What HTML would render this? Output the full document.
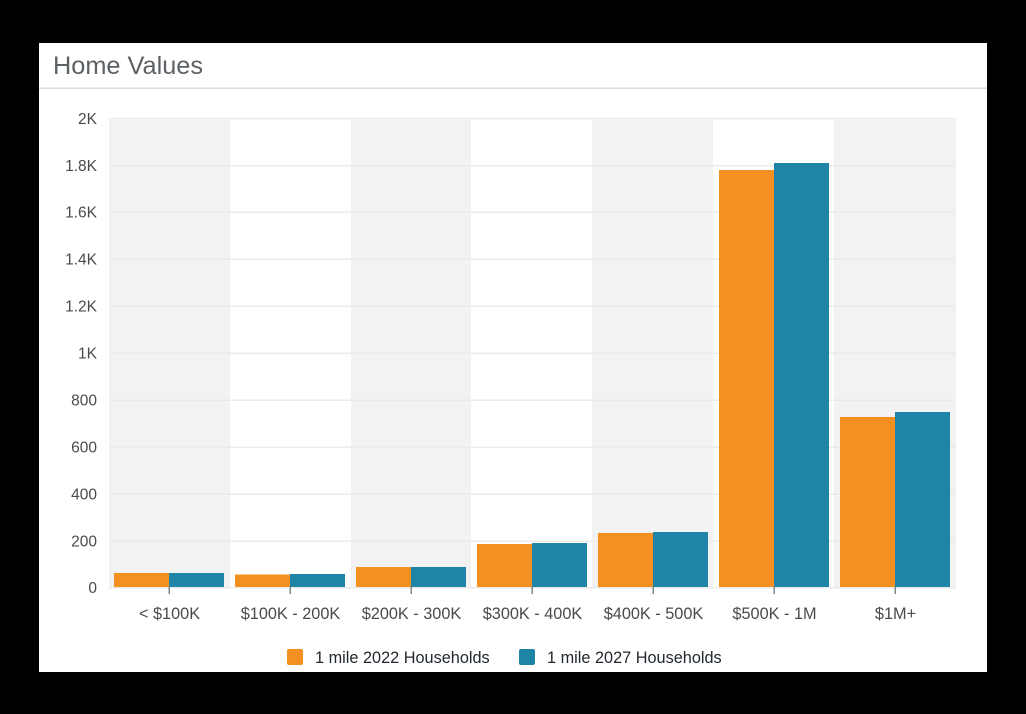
<!DOCTYPE html>
<html>
<head>
<meta charset="utf-8">
<style>
html,body{margin:0;padding:0;background:#000;width:1026px;height:714px;overflow:hidden}
svg{display:block;position:absolute;left:0;top:0}
text{font-family:"Liberation Sans",Arial,sans-serif}
.soft{filter:blur(.3px)}
</style>
</head>
<body>
<svg width="1026" height="714" viewBox="0 0 1026 714" xmlns="http://www.w3.org/2000/svg">
<rect x="39" y="43" width="948" height="629" fill="#fff"/>
<rect x="39" y="87.5" width="948" height="1.5" fill="#d9d9d9"/>
<text class="soft" x="53" y="74" font-size="25" fill="#5c6165" textLength="150" lengthAdjust="spacingAndGlyphs">Home Values</text>

<g fill="#f2f2f2">
<rect x="109" y="120" width="121" height="467"/>
<rect x="351" y="120" width="120" height="467"/>
<rect x="592" y="120" width="121" height="467"/>
<rect x="834" y="120" width="122" height="467"/>
</g>

<g fill="#ebebeb">
<rect x="109" y="118" width="847" height="1.5"/>
<rect x="109" y="165" width="847" height="1.5"/>
<rect x="109" y="211.5" width="847" height="1.5"/>
<rect x="109" y="258.5" width="847" height="1.5"/>
<rect x="109" y="305.5" width="847" height="1.5"/>
<rect x="109" y="352.5" width="847" height="1.5"/>
<rect x="109" y="399.5" width="847" height="1.5"/>
<rect x="109" y="446.5" width="847" height="1.5"/>
<rect x="109" y="493.5" width="847" height="1.5"/>
<rect x="109" y="540.5" width="847" height="1.5"/>
<rect x="109" y="587" width="847" height="1.5"/>
</g>

<g fill="#f39021">
<rect x="114" y="573" width="55" height="14"/>
<rect x="235" y="574.5" width="55" height="12.5"/>
<rect x="356" y="567" width="55" height="20"/>
<rect x="477" y="544" width="55" height="43"/>
<rect x="598" y="533" width="55" height="54"/>
<rect x="719" y="170" width="55" height="417"/>
<rect x="840" y="417" width="55" height="170"/>
</g>
<g fill="#2084a6">
<rect x="169" y="573" width="55" height="14"/>
<rect x="290" y="574" width="55" height="13"/>
<rect x="411" y="567" width="55" height="20"/>
<rect x="532" y="543" width="55" height="44"/>
<rect x="653" y="532" width="55" height="55"/>
<rect x="774" y="163" width="55" height="424"/>
<rect x="895" y="412" width="55" height="175"/>
</g>

<g fill="#7c8a8c">
<rect x="168.5" y="587" width="1.5" height="7"/>
<rect x="289.5" y="587" width="1.5" height="7"/>
<rect x="410.5" y="587" width="1.5" height="7"/>
<rect x="531.5" y="587" width="1.5" height="7"/>
<rect x="652.5" y="587" width="1.5" height="7"/>
<rect x="773.5" y="587" width="1.5" height="7"/>
<rect x="894.5" y="587" width="1.5" height="7"/>
</g>

<g class="soft" font-size="15.5" fill="#484b4e" text-anchor="end">
<text x="97" y="124">2K</text>
<text x="97" y="171">1.8K</text>
<text x="97" y="217.5">1.6K</text>
<text x="97" y="264.5">1.4K</text>
<text x="97" y="311.5">1.2K</text>
<text x="97" y="358.5">1K</text>
<text x="97" y="405.5">800</text>
<text x="97" y="452.5">600</text>
<text x="97" y="499.5">400</text>
<text x="97" y="546.5">200</text>
<text x="97" y="593">0</text>
</g>

<g class="soft" font-size="16.3" fill="#484b4e" text-anchor="middle">
<text x="169.5" y="619">&lt; $100K</text>
<text x="290.5" y="619">$100K - 200K</text>
<text x="411.5" y="619">$200K - 300K</text>
<text x="532.5" y="619">$300K - 400K</text>
<text x="653.5" y="619">$400K - 500K</text>
<text x="774.5" y="619">$500K - 1M</text>
<text x="895.5" y="619">$1M+</text>
</g>

<rect x="287" y="649" width="16" height="16" rx="2" fill="#f39021"/>
<rect x="519" y="649" width="16" height="16" rx="2" fill="#2084a6"/>
<g class="soft" font-size="16.3" fill="#22282f">
<text x="315" y="663">1 mile 2022 Households</text>
<text x="547" y="663">1 mile 2027 Households</text>
</g>
</svg>
</body>
</html>
